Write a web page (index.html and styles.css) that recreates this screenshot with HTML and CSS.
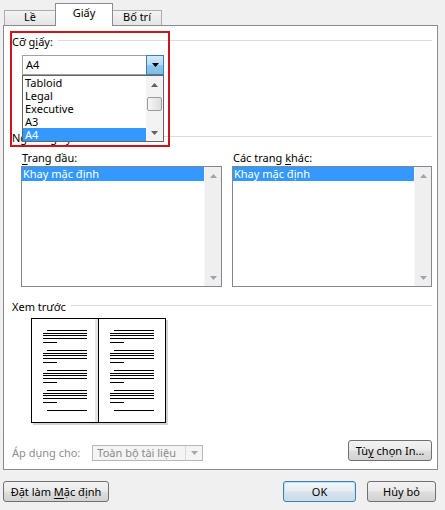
FILE: index.html
```html
<!DOCTYPE html>
<html>
<head>
  <meta charset="utf-8">
  <title>Thiết lập trang</title>
  <link rel="stylesheet" href="styles.css">
</head>
<body>
  <div class="dialog">
    <div class="tabs">
      <div class="tab tab-margins">Lề</div>
      <div class="tab tab-paper active">Giấy</div>
      <div class="tab tab-layout">Bố trí</div>
    </div>

    <div class="panel">
      <div class="group-title"><span>Cỡ g<u>i</u>ấy:</span></div>
      <div class="combo-wrap">
        <div class="combo">
          <span class="combo-value">A4</span>
          <span class="combo-btn">
            <svg width="7" height="4" viewBox="0 0 7 4"><path d="M0 0H7L3.5 4Z" fill="#000"/></svg>
          </span>
        </div>
        <div class="dropdown">
          <ul>
            <li>Tabloid</li>
            <li>Legal</li>
            <li>Executive</li>
            <li>A3</li>
            <li class="selected">A4</li>
          </ul>
          <div class="dd-scroll">
            <span class="arrow"><svg width="7" height="4" viewBox="0 0 7 4"><path d="M0 4H7L3.5 0Z" fill="#606060"/></svg></span>
            <span class="thumb"></span>
            <span class="arrow"><svg width="7" height="4" viewBox="0 0 7 4"><path d="M0 0H7L3.5 4Z" fill="#606060"/></svg></span>
          </div>
        </div>
      </div>

      <div class="group-title source"><span>Nguồn giấy</span></div>
      <div class="trays">
        <div class="tray tray-first">
          <div class="field-label"><u>T</u>rang đầu:</div>
          <div class="listbox">
            <div class="items"><div class="item selected">Khay mặc định</div></div>
            <div class="vscroll">
              <span class="arrow"><svg width="7" height="4" viewBox="0 0 7 4"><path d="M0 4H7L3.5 0Z" fill="#a3a3a3"/></svg></span>
              <span class="arrow"><svg width="7" height="4" viewBox="0 0 7 4"><path d="M0 0H7L3.5 4Z" fill="#a3a3a3"/></svg></span>
            </div>
          </div>
        </div>
        <div class="tray tray-other">
          <div class="field-label">Các trang <u>k</u>hác:</div>
          <div class="listbox">
            <div class="items"><div class="item selected">Khay mặc định</div></div>
            <div class="vscroll">
              <span class="arrow"><svg width="7" height="4" viewBox="0 0 7 4"><path d="M0 4H7L3.5 0Z" fill="#a3a3a3"/></svg></span>
              <span class="arrow"><svg width="7" height="4" viewBox="0 0 7 4"><path d="M0 0H7L3.5 4Z" fill="#a3a3a3"/></svg></span>
            </div>
          </div>
        </div>
      </div>

      <div class="group-title preview-title"><span>Xem trước</span></div>
      <div class="preview">
        <svg width="138" height="108" viewBox="0 0 138 108">
          <rect x="2" y="2" width="135" height="105" fill="#d4d4d4"/>
          <rect x="0.5" y="0.5" width="134" height="104" fill="#fff" stroke="#000"/>
          <rect x="64" y="1" width="3" height="103" fill="#e6e6e6"/>
          <path d="M67.5 0V105" stroke="#000"/>
          <path stroke="#000" shape-rendering="crispEdges" d="
            M16 12.5H56M12 15.5H56M12 17.5H56M12 20.5H56M12 24.5H26
            M16 32.5H56M12 35.5H56M12 37.5H56M12 40.5H56M12 44.5H26
            M16 52.5H56M12 55.5H56M12 57.5H56M12 60.5H56M12 64.5H26
            M16 72.5H56M12 75.5H56M12 77.5H56M12 80.5H56M12 84.5H26
            M16 92.5H56
            M83 12.5H123M79 15.5H123M79 17.5H123M79 20.5H123M79 24.5H93
            M83 32.5H123M79 35.5H123M79 37.5H123M79 40.5H123M79 44.5H93
            M83 52.5H123M79 55.5H123M79 57.5H123M79 60.5H123M79 64.5H93
            M83 72.5H123M79 75.5H123M79 77.5H123M79 80.5H123M79 84.5H93
            M83 92.5H123"/>
        </svg>
      </div>

      <div class="apply-row">
        <span class="apply-label">Áp dụng cho:</span>
        <div class="select-disabled">
          <span class="select-value">Toàn bộ tài liệu</span>
          <span class="select-arrow"><svg width="7" height="4" viewBox="0 0 7 4"><path d="M0 0H7L3.5 4Z" fill="#a8a8a8"/></svg></span>
        </div>
        <button class="btn btn-print">Tù<u>y</u> chọn In...</button>
      </div>

      <div class="highlight"></div>
    </div>

    <div class="footer">
      <button class="btn btn-default">Đặt làm <u>M</u>ặc định</button>
      <button class="btn btn-ok">OK</button>
      <button class="btn btn-cancel">Hủy bỏ</button>
    </div>
  </div>
</body>
</html>
```

FILE: styles.css
```css
* {
  box-sizing: border-box;
}

html, body {
  margin: 0;
  padding: 0;
}

body {
  width: 445px;
  height: 510px;
  overflow: hidden;
  background-color: #f0f0f0;
  font-family: "Noto Sans", "Liberation Sans", sans-serif;
  font-size: 11px;
  line-height: 15px;
  color: #000;
}

u {
  text-decoration-thickness: 1px;
  text-underline-offset: 2px;
}

.dialog {
  padding: 3px 7px 0 3px;
}

/* tabs */
.tabs {
  display: flex;
  align-items: flex-end;
  height: 22px;
  padding-left: 1px;
}

.tab {
  height: 15px;
  border: 1px solid #acacac;
  border-bottom: none;
  background: linear-gradient(#f4f4f4, #e4e4e4);
  text-align: center;
  line-height: 11px;
}

.tab-margins { width: 52px; }
.tab-layout { width: 50px; }

.tab.active {
  width: 58px;
  height: 23px;
  margin: 0 -1px -1px -1px;
  border-color: #898c95;
  background: #ffffff;
  line-height: 17px;
  position: relative;
  z-index: 1;
}

/* main panel */
.panel {
  position: relative;
  height: 445px;
  border: 1px solid #898c95;
  background-color: #ffffff;
  padding: 0 5px 0 8px;
}

.group-title {
  display: flex;
  align-items: center;
  height: 15px;
  margin-top: 8px;
}

.group-title::after {
  content: '';
  flex: 1;
  height: 1px;
  margin: -2px 0 0 5px;
  background-color: #dcdcdc;
}

.group-title.source {
  margin-top: 55px;
}

.group-title.preview-title {
  margin-top: 12px;
}

/* paper size combo */
.combo-wrap {
  position: relative;
  width: 142px;
  margin: 6px 0 0 10px;
}

.combo {
  display: flex;
  height: 20px;
  border: 1px solid #a0a0a0;
  background: #fff;
}

.combo-value {
  flex: 1;
  padding-left: 3px;
  line-height: 18px;
}

.combo-btn {
  display: flex;
  align-items: center;
  justify-content: center;
  width: 18px;
  margin: -1px -1px -1px 0;
  border: 1px solid #3c7fb1;
  background: linear-gradient(#d3ebfa, #b3daf4 50%, #92c6ec 51%, #7fbbe6);
}

.dropdown {
  position: absolute;
  top: 20px;
  left: 0;
  z-index: 2;
  display: flex;
  width: 142px;
  height: 67px;
  border: 1px solid #646464;
  background: #fff;
}

.dropdown ul {
  flex: 1;
  list-style: none;
  margin: 0;
  padding: 0;
}

.dropdown li {
  height: 13px;
  line-height: 13px;
  padding-left: 2px;
}

.dropdown li.selected,
.item.selected {
  background-color: #3399ff;
  color: #fff;
}

.dd-scroll {
  display: flex;
  flex-direction: column;
  width: 17px;
  background: #f3f3f3;
}

.dd-scroll .thumb {
  height: 14px;
  margin: 4px 1px 0 1px;
  border: 1px solid #9c9c9c;
  border-radius: 2px;
  background: linear-gradient(90deg, #f5f5f5, #dedede);
  flex-shrink: 0;
}

.dd-scroll .arrow:last-child {
  margin-top: auto;
}

.arrow {
  display: flex;
  align-items: center;
  justify-content: center;
  height: 17px;
  flex-shrink: 0;
}

/* paper source lists */
.trays {
  display: flex;
  gap: 10px;
  margin: 5px 0 0 9px;
}

.tray-first { width: 201px; }
.tray-other { width: 200px; }

.field-label {
  height: 15px;
  padding-left: 1px;
}

.listbox {
  display: flex;
  height: 121px;
  margin-top: 1px;
  border: 1px solid #828790;
  background: #fff;
}

.items {
  flex: 1;
}

.item {
  height: 14px;
  line-height: 14px;
  padding-left: 1px;
}

.vscroll {
  display: flex;
  flex-direction: column;
  justify-content: space-between;
  width: 17px;
  background: #efefef;
  border-left: 1px solid #f6f6f6;
}

/* preview */
.preview {
  height: 105px;
  margin: 4px 0 0 19px;
}

.preview svg {
  display: block;
}

/* apply row */
.apply-row {
  display: flex;
  align-items: flex-end;
  height: 21px;
  margin-top: 17px;
}

.apply-label {
  color: #8d8d8d;
  margin: 0 12px 1px 0;
}

.select-disabled {
  display: flex;
  width: 111px;
  height: 16px;
  border: 1px solid #b4b8bb;
  background: #f4f4f4;
  color: #8a8a8a;
}

.select-value {
  flex: 1;
  padding-left: 4px;
  line-height: 14px;
}

.select-arrow {
  display: flex;
  align-items: center;
  justify-content: center;
  width: 17px;
  border-left: 1px solid #d9d9d9;
}

/* buttons */
.btn {
  height: 21px;
  padding: 0;
  border: 1px solid #707070;
  border-radius: 3px;
  background: linear-gradient(#f2f2f2, #ebebeb 45%, #dddddd 55%, #d2d2d2);
  font: inherit;
  color: #000;
  line-height: 17px;
  text-align: center;
}

.btn-print {
  width: 84px;
  margin-left: auto;
}

.footer {
  display: flex;
  gap: 11px;
  margin-top: 11px;
  padding-right: 2px;
}

.btn-default {
  width: 106px;
  margin-right: auto;
}

.btn-ok {
  width: 73px;
  border-color: #3c7fb1;
  box-shadow: inset 0 0 0 1px #bfe4f9;
  background: linear-gradient(#f4f8fb, #e6eef4 45%, #d7e3ec 55%, #cddae4);
}

.btn-cancel {
  width: 69px;
}

/* red annotation box */
.highlight {
  position: absolute;
  left: 6px;
  top: 5px;
  z-index: 3;
  width: 160px;
  height: 116px;
  border: 2px solid #d0121b;
  pointer-events: none;
}
```
